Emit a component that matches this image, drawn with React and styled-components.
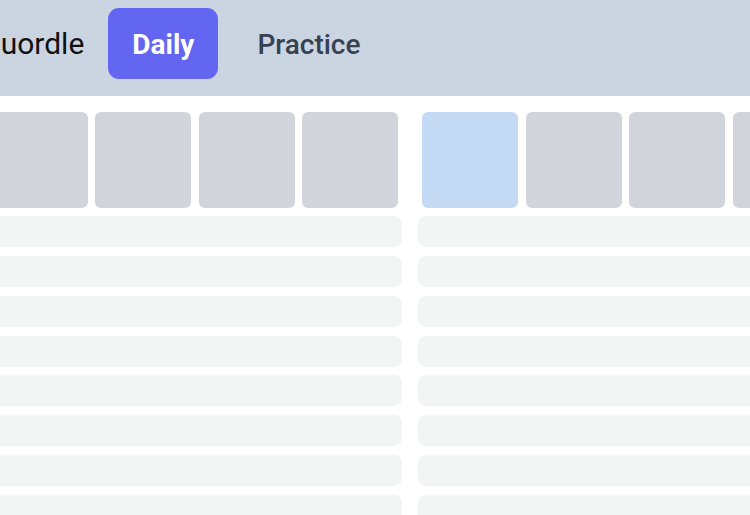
import React from 'react';
import styled, { createGlobalStyle } from 'styled-components';

const GlobalStyle = createGlobalStyle`
  html, body {
    margin: 0;
    padding: 0;
    background: #ffffff;
    font-family: Roboto, "Noto Sans", Arial, sans-serif;
  }
`;

const Viewport = styled.div`
  width: 750px;
  height: 515px;
  overflow: hidden;
  background: #ffffff;
`;

const Header = styled.header`
  height: 96px;
  box-sizing: border-box;
  padding: 8px 0 17px;
  background: #cbd5e1;
  display: flex;
  align-items: center;
`;

const Nav = styled.nav`
  display: flex;
  align-items: center;
  margin-left: -20px;
`;

const Title = styled.h1`
  margin: 0 24px 0 0;
  font-size: 30px;
  font-weight: 400;
  color: #111111;
  white-space: nowrap;
`;

const ModeButton = styled.button`
  height: 71px;
  padding: 1px 24px 0;
  margin-right: 15px;
  border: none;
  border-radius: 11px;
  font-family: inherit;
  font-size: 28px;
  font-weight: ${(p) => (p.$active ? 700 : 500)};
  color: ${(p) => (p.$active ? '#ffffff' : '#374151')};
  background: ${(p) => (p.$active ? '#6366f1' : 'transparent')};
  cursor: pointer;
`;

const Boards = styled.main`
  display: flex;
  gap: 16px;
  margin-left: -116px;
  padding-top: 16px;
`;

const Board = styled.section`
  width: 518px;
  flex: none;
  display: flex;
  flex-direction: column;
`;

const TileRow = styled.div`
  display: flex;
  gap: 7.5px;
  padding: 0 4px;
  margin-bottom: 8px;
`;

const Tile = styled.div`
  width: 96px;
  height: 96px;
  flex: none;
  border-radius: 6px;
  background: ${(p) => (p.$current ? '#c3d9f4' : '#d1d5db')};
`;

const Guesses = styled.div`
  display: flex;
  flex-direction: column;
  gap: 8.85px;
`;

const GuessRow = styled.div`
  height: 31px;
  border-radius: 8px;
  background: #f3f4f4;
`;

const BoardView = ({ current }) => (
  <Board>
    <TileRow>
      {[0, 1, 2, 3, 4].map((i) => (
        <Tile key={i} $current={i === current} />
      ))}
    </TileRow>
    <Guesses>
      {Array.from({ length: 9 }).map((_, i) => (
        <GuessRow key={i} />
      ))}
    </Guesses>
  </Board>
);

const App = () => (
  <Viewport>
    <GlobalStyle />
    <Header>
      <Nav>
        <Title>Quordle</Title>
        <ModeButton $active>Daily</ModeButton>
        <ModeButton>Practice</ModeButton>
      </Nav>
    </Header>
    <Boards>
      <BoardView current={-1} />
      <BoardView current={0} />
    </Boards>
  </Viewport>
);

export default App;
